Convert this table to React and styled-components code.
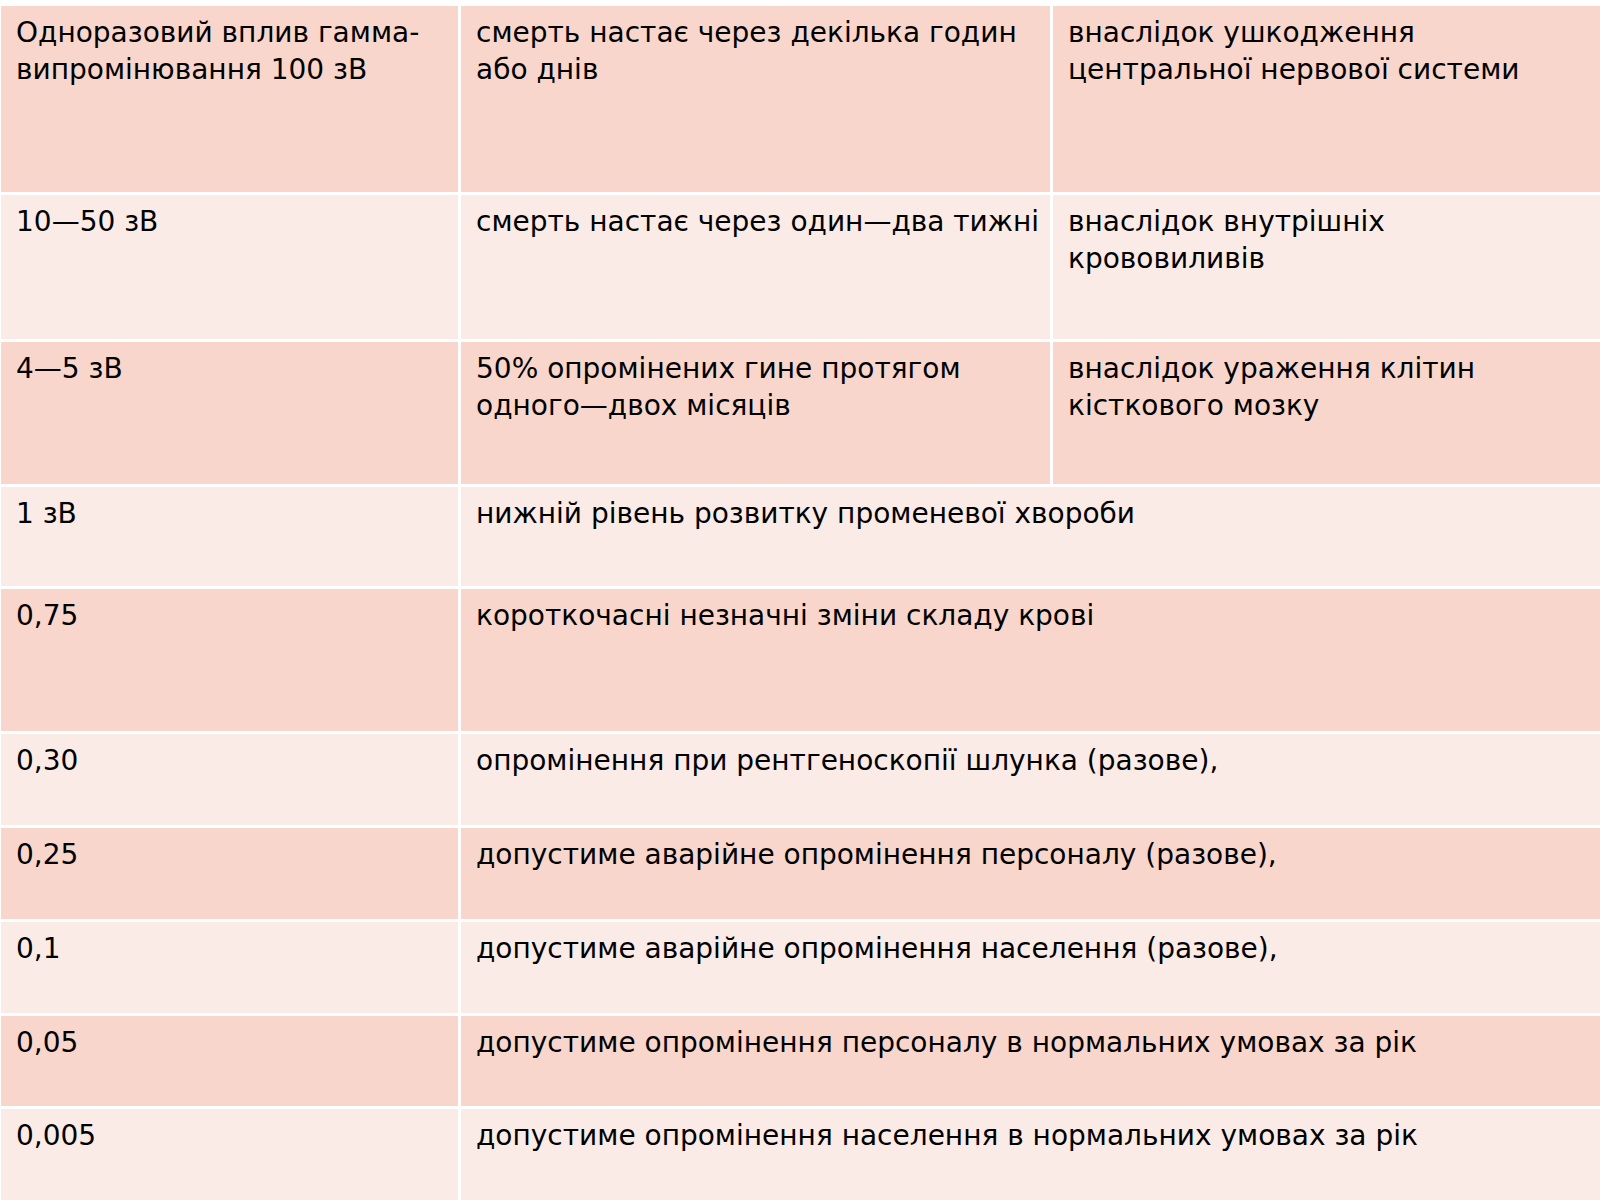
import styled, { createGlobalStyle } from "styled-components";

const GlobalStyle = createGlobalStyle`
  html, body {
    margin: 0;
    padding: 0;
    background: #ffffff;
  }
`;

// each cell is a list of lines, as the slide breaks them
const rows = [
  {
    dose: ["Одноразовий вплив гамма-", "випромінювання 100 зВ"],
    effect: ["смерть настає через декілька годин", "або днів"],
    cause: ["внаслідок ушкодження", "центральної нервової системи"],
    height: 186,
  },
  {
    dose: ["10—50 зВ"],
    effect: ["смерть настає через один—два тижні"],
    cause: ["внаслідок внутрішніх", "крововиливів"],
    height: 144,
  },
  {
    dose: ["4—5 зВ"],
    effect: ["50% опромінених гине протягом", "одного—двох місяців"],
    cause: ["внаслідок ураження клітин", "кісткового мозку"],
    height: 142,
  },
  { dose: ["1 зВ"], effect: ["нижній рівень розвитку променевої хвороби"], height: 99 },
  { dose: ["0,75"], effect: ["короткочасні незначні зміни складу крові"], height: 142 },
  { dose: ["0,30"], effect: ["опромінення при рентгеноскопії шлунка (разове),"], height: 91 },
  { dose: ["0,25"], effect: ["допустиме аварійне опромінення персоналу (разове),"], height: 91 },
  { dose: ["0,1"], effect: ["допустиме аварійне опромінення населення (разове),"], height: 91 },
  { dose: ["0,05"], effect: ["допустиме опромінення персоналу в нормальних умовах за рік"], height: 90 },
  { dose: ["0,005"], effect: ["допустиме опромінення населення в нормальних умовах за рік"], height: 91 },
];

function Lines({ lines }) {
  return lines.map((line) => <Line key={line}>{line}</Line>);
}

function App() {
  return (
    <>
      <GlobalStyle />
      <Page>
        <DoseTable $rows={rows.map((r) => `${r.height}px`).join(" ")}>
          {rows.map((row, i) => (
            <Row key={row.dose[0]} $shade={i % 2 === 0 ? "dark" : "light"}>
              <Cell>
                <Lines lines={row.dose} />
              </Cell>
              {row.cause ? (
                <>
                  <Cell>
                    <Lines lines={row.effect} />
                  </Cell>
                  <Cell>
                    <Lines lines={row.cause} />
                  </Cell>
                </>
              ) : (
                <Cell $span={2}>
                  <Lines lines={row.effect} />
                </Cell>
              )}
            </Row>
          ))}
        </DoseTable>
      </Page>
    </>
  );
}

const Page = styled.div`
  padding: 6px 0 0 1px;
  width: 1599px;
`;

const DoseTable = styled.div`
  display: grid;
  grid-template-columns: 457px 589px 547px;
  grid-template-rows: ${({ $rows }) => $rows};
  gap: 3px;
  font-family: "DejaVu Sans", "Liberation Sans", sans-serif;
  font-size: 28px;
  line-height: 37px;
  color: #000000;
`;

const Row = styled.div`
  display: contents;

  & > div {
    background-color: ${({ $shade }) => ($shade === "dark" ? "#f8d6cb" : "#fbebe7")};
  }
`;

const Cell = styled.div`
  grid-column: span ${({ $span }) => $span || 1};
  padding: 8px 8px 0 15px;
  box-sizing: border-box;
  overflow: hidden;
`;

const Line = styled.div`
  white-space: nowrap;
`;

export default App;
